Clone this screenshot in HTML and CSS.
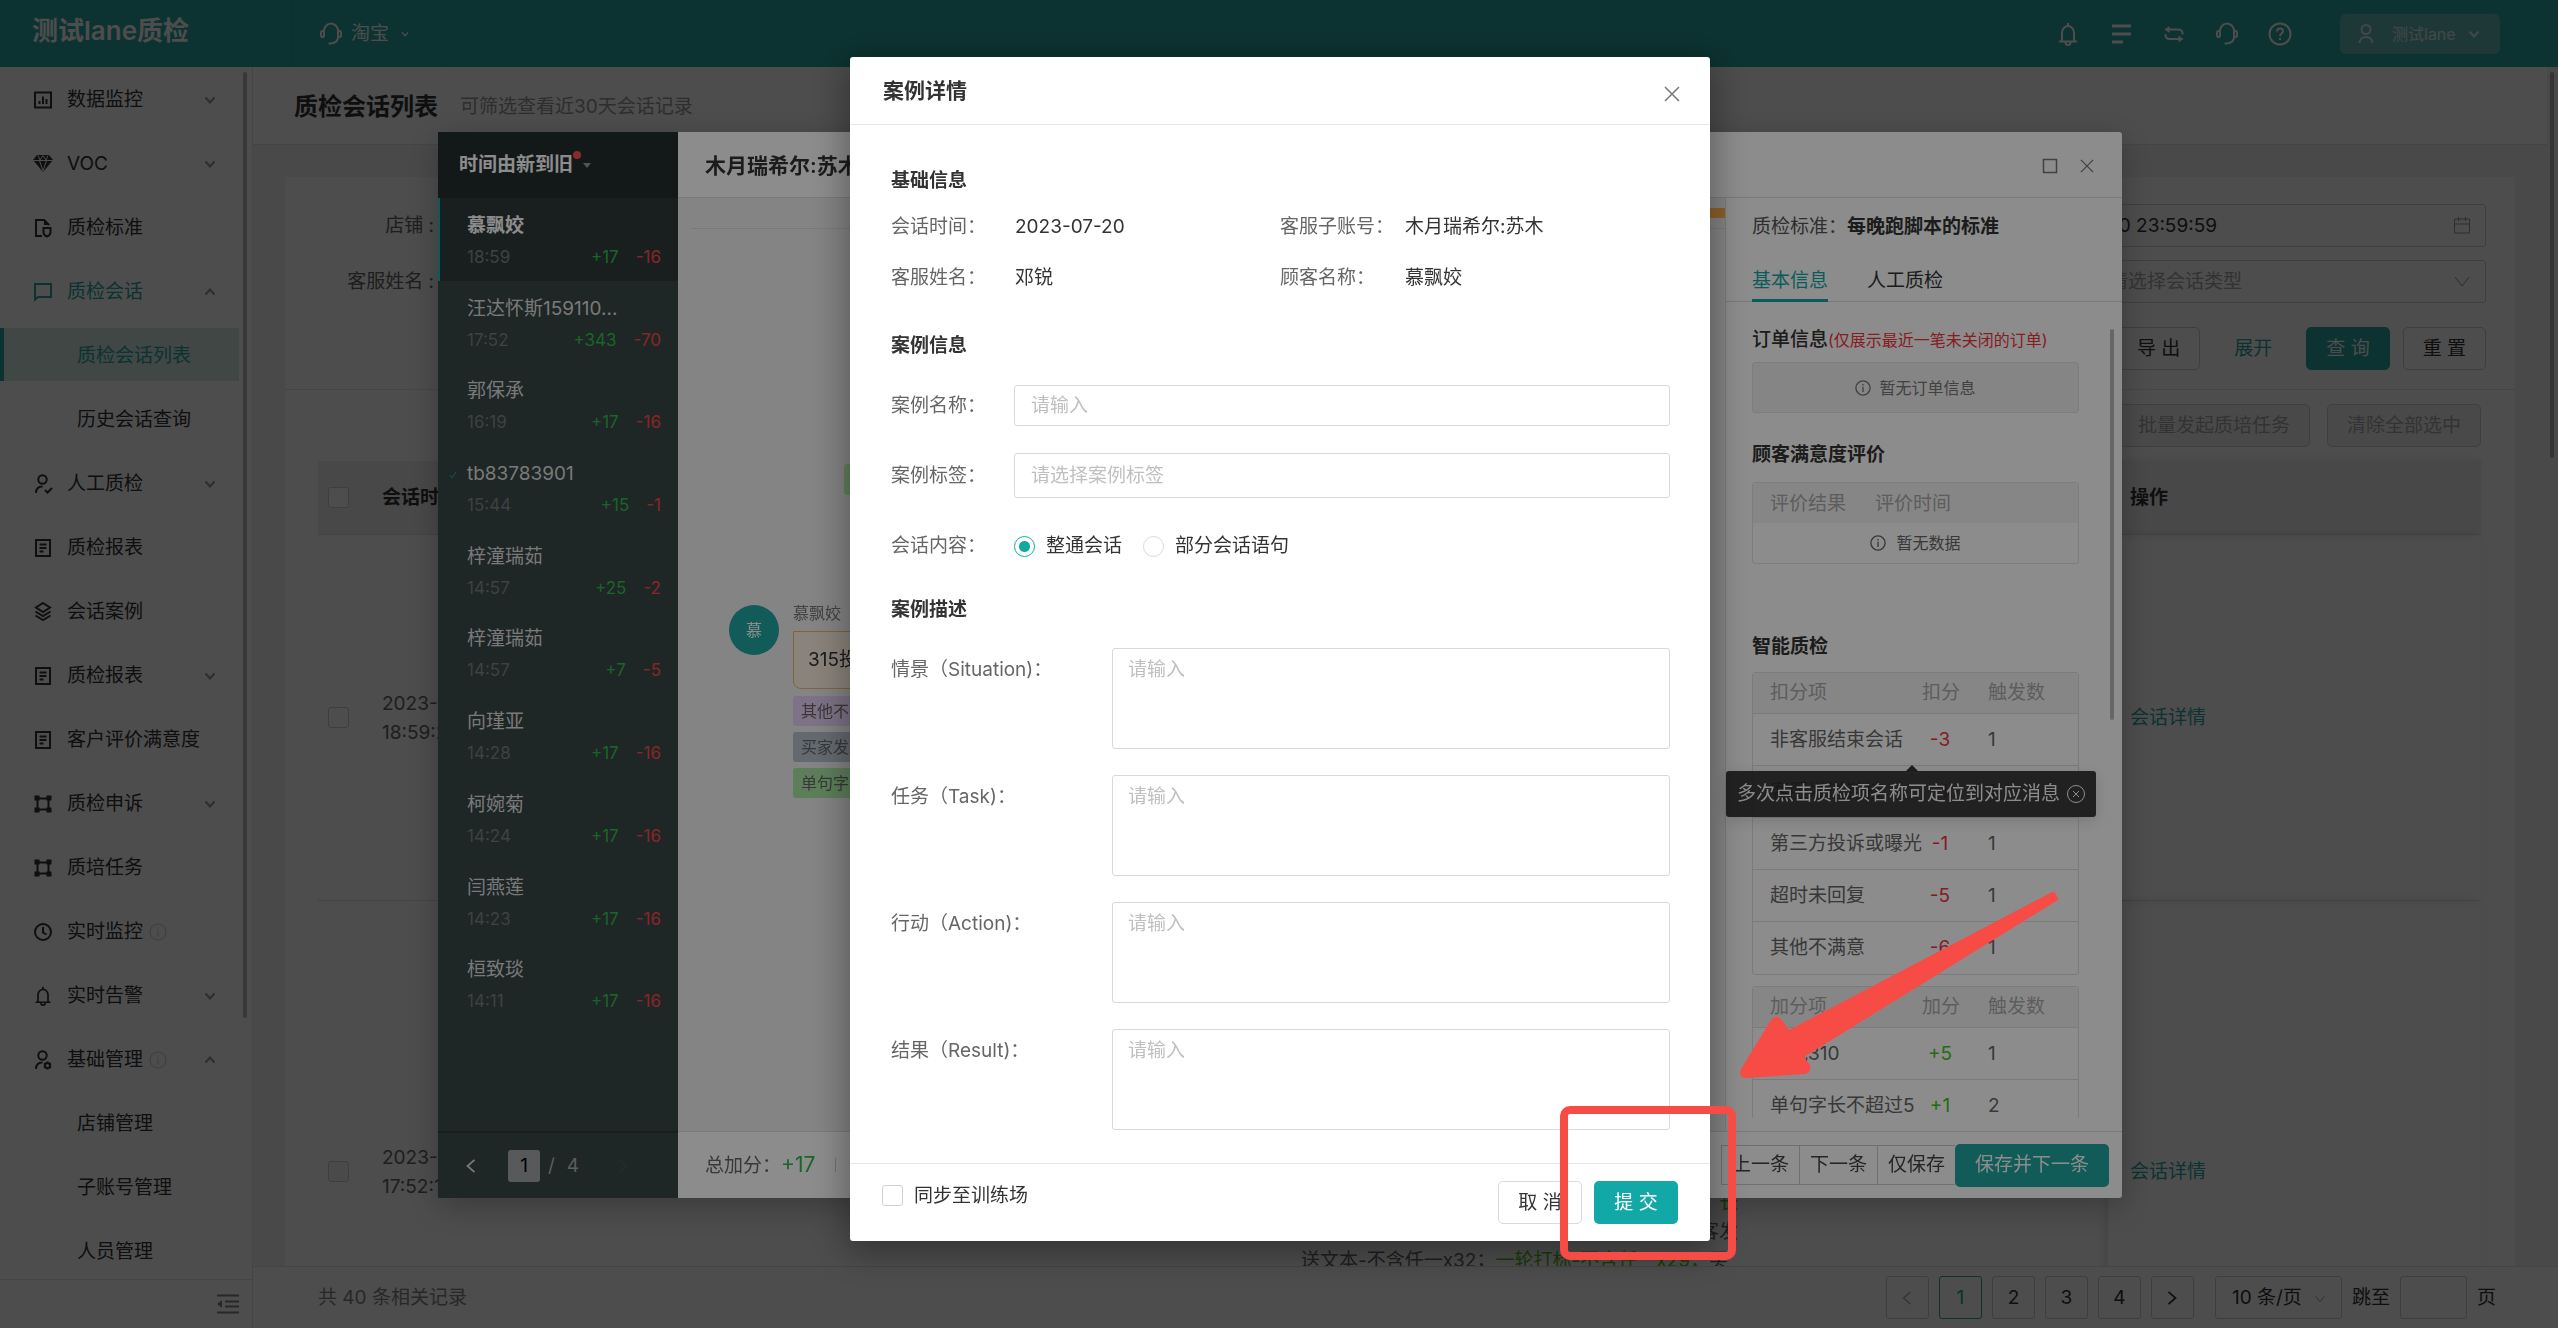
FILE: index.html
```html
<!DOCTYPE html>
<html lang="zh-CN">
<head>
<meta charset="utf-8">
<title>质检会话列表</title>
<link rel="stylesheet" href="styles.css">
</head>
<body>
<svg class="sprite" aria-hidden="true">
  <symbol id="i-down" viewBox="0 0 12 12"><path d="M1.500 3.500 6 8.500l4.500-5" /></symbol>
  <symbol id="i-up" viewBox="0 0 12 12"><path d="M1.500 8.500 6 3.500l4.500 5" /></symbol>
  <symbol id="i-left" viewBox="0 0 12 16"><path d="M10 1 2 8l8 7" /></symbol>
  <symbol id="i-right" viewBox="0 0 12 16"><path d="m2 1 8 7-8 7" /></symbol>
  <symbol id="i-x" viewBox="0 0 16 16"><path d="m1 1 14 14M15 1 1 15" /></symbol>
  <symbol id="i-info" viewBox="0 0 18 18"><circle cx="9" cy="9" r="8" /><path d="M9 7.500v6M9 4.500v1.600" /></symbol>
  <symbol id="i-chart" viewBox="0 0 20 20"><path d="M2 2.500h16v15H2zM6.500 11v3M10 6.500V14M13.500 9v5" /></symbol>
  <symbol id="i-voc" viewBox="0 0 20 20"><path class="solid" d="M4 1h12l4 5-10 12L0 6z" /><path class="cut" d="M0 6.500h20M6.500 6.500 10 17l3.500-10.500M5 1.500l2 4.500 3-4.500 3 4.500 2-4.500" /></symbol>
  <symbol id="i-std" viewBox="0 0 20 20"><path d="M9 18H3V2h8l5 5" /><path class="solid" d="M11 1v6h6z" /><path d="M10.500 10h7v4.500q0 2.500-3.500 4-3.500-1.500-3.500-4z" /></symbol>
  <symbol id="i-chat" viewBox="0 0 20 20"><path d="M2 2h16v13H5l-3 2.500z" /></symbol>
  <symbol id="i-user" viewBox="0 0 20 20"><circle cx="9.500" cy="5.500" r="4.200" /><path d="M3 19c0-4 2.500-6.500 6.500-6.500M12 16l2.500 2.500 4.500-4.500" /></symbol>
  <symbol id="i-userset" viewBox="0 0 20 20"><circle cx="9.500" cy="5.500" r="4.200" /><path d="M3 19c0-4 2.500-6.500 6.500-6.500" /><circle cx="14.500" cy="15.500" r="2.500" /><path d="M14.500 11.500v1.500M14.500 18v1.500M11 13.500l1.500.8M16.500 16.700l1.500.8M18 13.500l-1.500.8M12.500 16.700l-1.500.8" /></symbol>
  <symbol id="i-doc" viewBox="0 0 20 20"><path d="M3 2h14v16H3zM6.500 6.500h7M6.500 10h7M6.500 13.500h4" /></symbol>
  <symbol id="i-layers" viewBox="0 0 20 20"><path d="m10 1 7 4.500-7 4.500-7-4.500zM2.500 9.500 10 14l7.500-4.500M2.500 13.500 10 18l7.500-4.500" /></symbol>
  <symbol id="i-frame" viewBox="0 0 20 20"><path d="M4.500 4.500h11v11h-11z" /><path class="solid" d="M1.500 1.500h5v5h-5zM13.500 1.500h5v5h-5zM1.500 13.500h5v5h-5zM13.500 13.500h5v5h-5z" /></symbol>
  <symbol id="i-clock" viewBox="0 0 20 20"><circle cx="10" cy="10" r="8" /><path d="M10 5v5.500l3.500 2" /></symbol>
  <symbol id="i-bell" viewBox="0 0 20 24"><path d="M4 19v-8a6 7 0 0 1 12 0v8M1 19.500h18M10 1v3M7.500 20.500a2.500 2.500 0 0 0 5 0" /></symbol>
  <symbol id="i-headset" viewBox="0 0 24 24"><path d="M5 15V9a7 7.500 0 0 1 14 0v6c0 4-3 6-7 6.500M5 9H3.500a1.500 1.500 0 0 0-1.500 1.500v3A1.500 1.500 0 0 0 3.500 15H5M19 9h1.500a1.500 1.500 0 0 1 1.500 1.500v3a1.500 1.500 0 0 1-1.500 1.500H19M9.500 21.500H13" /></symbol>
</svg>

<div class="app">
  <header class="topbar">
    <div class="logo">测试lane质检</div>
    <button class="platform" type="button"><svg class="ico24"><use href="#i-headset" /></svg>淘宝<svg class="ico8"><use href="#i-down" /></svg></button>
    <div class="tools">
      <svg class="ico24"><use href="#i-bell" /></svg>
      <svg class="ico24" viewBox="0 0 24 24"><path class="bars" d="M3 4h19M3 12h19M3 20h11" /></svg>
      <svg class="ico24" viewBox="0 0 24 24"><path d="M6 7.500h10q4.500 0 4.500 4v1M18 17H8q-4.500 0-4.500-4v-1" /><path class="solid" d="M7.500 4v7L2.500 7.500zM16.500 13.500v7l5-3.500z" /></svg>
      <svg class="ico24"><use href="#i-headset" /></svg>
      <svg class="ico24" viewBox="0 0 24 24"><circle cx="12" cy="12" r="10.500" /><path d="M9 9.500c0-4 6-4 6-.3 0 2.300-3 2.300-3 5M12 16v2" /></svg>
    </div>
    <button class="account" type="button"><svg class="ico20" viewBox="0 0 20 20"><circle cx="10" cy="5.500" r="4.500" /><path d="M3.500 19c0-8 13-8 13 0" /></svg>测试lane<svg class="ico12"><use href="#i-down" /></svg></button>
  </header>

  <div class="frame">
    <nav class="side">
      <ul class="menu">
        <li><a href="#"><svg class="ico20"><use href="#i-chart" /></svg>数据监控<svg class="arrow"><use href="#i-down" /></svg></a></li>
        <li><a href="#"><svg class="ico20"><use href="#i-voc" /></svg>VOC<svg class="arrow"><use href="#i-down" /></svg></a></li>
        <li><a href="#"><svg class="ico20"><use href="#i-std" /></svg>质检标准</a></li>
        <li><a href="#" class="open"><svg class="ico20"><use href="#i-chat" /></svg>质检会话<svg class="arrow"><use href="#i-up" /></svg></a></li>
        <li><a href="#" class="sub active">质检会话列表</a></li>
        <li><a href="#" class="sub">历史会话查询</a></li>
        <li><a href="#"><svg class="ico20"><use href="#i-user" /></svg>人工质检<svg class="arrow"><use href="#i-down" /></svg></a></li>
        <li><a href="#"><svg class="ico20"><use href="#i-doc" /></svg>质检报表</a></li>
        <li><a href="#"><svg class="ico20"><use href="#i-layers" /></svg>会话案例</a></li>
        <li><a href="#"><svg class="ico20"><use href="#i-doc" /></svg>质检报表<svg class="arrow"><use href="#i-down" /></svg></a></li>
        <li><a href="#"><svg class="ico20"><use href="#i-doc" /></svg>客户评价满意度</a></li>
        <li><a href="#"><svg class="ico20"><use href="#i-frame" /></svg>质检申诉<svg class="arrow"><use href="#i-down" /></svg></a></li>
        <li><a href="#"><svg class="ico20"><use href="#i-frame" /></svg>质培任务</a></li>
        <li><a href="#"><svg class="ico20"><use href="#i-clock" /></svg>实时监控<svg class="tip-ico"><use href="#i-info" /></svg></a></li>
        <li><a href="#"><svg class="ico20"><use href="#i-bell" /></svg>实时告警<svg class="arrow"><use href="#i-down" /></svg></a></li>
        <li><a href="#"><svg class="ico20"><use href="#i-userset" /></svg>基础管理<svg class="tip-ico"><use href="#i-info" /></svg><svg class="arrow"><use href="#i-up" /></svg></a></li>
        <li><a href="#" class="sub">店铺管理</a></li>
        <li><a href="#" class="sub">子账号管理</a></li>
        <li><a href="#" class="sub">人员管理</a></li>
      </ul>
      <div class="side-foot"><svg class="fold" viewBox="0 0 22 20"><path d="M0 1.500h22M8 7.500h14M8 12.500h14M0 18.500h22" /><path class="solid" d="M0 10l5-4v8z" /></svg></div>
      <span class="thumb side-thumb"></span>
    </nav>

    <main class="main">
      <div class="page-head"><h1>质检会话列表</h1><span>可筛选查看近30天会话记录</span></div>
      <div class="content">
        <section class="card">
          <form class="filters">
            <div class="filter-row">
              <label for="shop">店铺 :</label><input id="shop" class="grow" type="text">
              <span class="field"><input class="date" type="text" value="2023-07-20 23:59:59" aria-label="会话日期"><svg class="cal" viewBox="0 0 18 18"><path d="M1.500 3h15v14h-15zM1.500 8h15M5.500 1v4M12.500 1v4" /></svg></span>
            </div>
            <div class="filter-row">
              <label for="agent">客服姓名 :</label><input id="agent" class="grow" type="text">
              <span class="field"><select class="ctype" aria-label="会话类型"><option>请选择会话类型</option></select><svg class="cal" viewBox="0 0 18 18"><path d="m2 5 7 9 7-9" /></svg></span>
            </div>
            <div class="filter-actions">
              <button type="button">导 出</button><a href="#">展开</a><button class="primary" type="button">查 询</button><button type="button">重 置</button>
            </div>
          </form>
          <div class="batch"><button type="button" disabled>批量发起质培任务</button><button type="button" disabled>清除全部选中</button></div>
          <table class="list">
            <colgroup><col class="c-check"><col class="c-time"><col class="c-fill"><col class="c-text"><col class="c-fill2"><col class="c-op"></colgroup>
            <thead><tr><th><input type="checkbox" aria-label="全选"></th><th>会话时间</th><th></th><th></th><th></th><th class="op">操作</th></tr></thead>
            <tbody>
              <tr class="r1"><td><input type="checkbox" aria-label="选择会话"></td><td>2023-07-20<br>18:59:22</td><td></td><td></td><td></td><td class="op"><a href="#">会话详情</a></td></tr>
              <tr class="r2"><td><input type="checkbox" aria-label="选择会话" disabled></td><td>2023-07-20<br>17:52:16</td><td></td>
                <td class="marks"><div class="end good">长</div><div class="end">客发</div><div>送文本-不含任一x32；<span class="good">一轮打标-不含任一x29；</span>买</div></td><td></td><td class="op"><a href="#">会话详情</a></td></tr>
            </tbody>
          </table>
        </section>
      </div>
      <span class="thumb main-thumb"></span>
      <footer class="pager">
        <span class="total">共 40 条相关记录</span>
        <button type="button" class="dim" aria-label="上一页"><svg class="ico14"><use href="#i-left" /></svg></button>
        <button type="button" class="on">1</button><button type="button">2</button><button type="button">3</button><button type="button">4</button>
        <button type="button" aria-label="下一页"><svg class="ico14"><use href="#i-right" /></svg></button>
        <span class="size"><select aria-label="每页条数"><option>10 条/页</option></select><svg class="ico12"><use href="#i-down" /></svg></span>
        <label for="jump">跳至</label><input id="jump" type="text"><span>页</span>
      </footer>
    </main>
  </div>
</div>

<div class="mask session-mask">
  <section class="session" role="dialog" aria-label="会话详情">
    <aside class="queue">
      <div class="queue-head">时间由新到旧<i class="dot"></i><i class="caret"></i></div>
      <ul>
        <li class="cur"><b>慕飘姣</b><p><time>18:59</time><em>+17</em><i>-16</i></p></li>
        <li><b>汪达怀斯159110...</b><p><time>17:52</time><em>+343</em><i>-70</i></p></li>
        <li><b>郭保承</b><p><time>16:19</time><em>+17</em><i>-16</i></p></li>
        <li class="done"><svg class="ico8" viewBox="0 0 8 8"><path d="m1 4 2 3 4-6" /></svg><b>tb83783901</b><p><time>15:44</time><em>+15</em><i>-1</i></p></li>
        <li><b>梓潼瑞茹</b><p><time>14:57</time><em>+25</em><i>-2</i></p></li>
        <li><b>梓潼瑞茹</b><p><time>14:57</time><em>+7</em><i>-5</i></p></li>
        <li><b>向瑾亚</b><p><time>14:28</time><em>+17</em><i>-16</i></p></li>
        <li><b>柯婉菊</b><p><time>14:24</time><em>+17</em><i>-16</i></p></li>
        <li><b>闫燕莲</b><p><time>14:23</time><em>+17</em><i>-16</i></p></li>
        <li><b>桓致琰</b><p><time>14:11</time><em>+17</em><i>-16</i></p></li>
      </ul>
      <div class="queue-foot"><button type="button" aria-label="上一页"><svg class="ico14"><use href="#i-left" /></svg></button><input type="text" value="1" aria-label="页码"><span>/</span><span>4</span><button type="button" class="off" aria-label="下一页"><svg class="ico14"><use href="#i-right" /></svg></button></div>
    </aside>
    <div class="work">
      <header class="work-head"><h2>木月瑞希尔:苏木</h2><button type="button" aria-label="最大化"><svg class="ico16" viewBox="0 0 16 16"><path d="M1.500 1.500h13v13h-13z" /></svg></button><button type="button" aria-label="关闭"><svg class="ico14"><use href="#i-x" /></svg></button></header>
      <div class="work-body">
        <div class="chat">
          <div class="chat-bar"><i></i></div>
          <div class="chat-note"><span>开场白</span></div>
          <div class="msg">
            <span class="avatar">慕</span>
            <div><p class="who">慕飘姣</p><p class="bubble">315投诉你们</p><p class="tag violet">其他不满意</p><p class="tag slate">买家发送</p><p class="tag green">单句字长</p></div>
          </div>
        </div>
        <div class="panel">
          <p class="std">质检标准：<b>每晚跑脚本的标准</b></p>
          <div class="tabs"><a href="#" class="on">基本信息</a><a href="#">人工质检</a></div>
          <div class="scroll">
            <h3>订单信息<small>(仅展示最近一笔未关闭的订单)</small></h3>
            <div class="none"><svg class="ico16"><use href="#i-info" /></svg>暂无订单信息</div>
            <h3 class="rate-title">顾客满意度评价</h3>
            <div class="rate"><div class="rate-head"><span>评价结果</span><span>评价时间</span></div><div class="rate-none"><svg class="ico16"><use href="#i-info" /></svg>暂无数据</div></div>
            <h3 class="ai-title">智能质检</h3>
            <table class="score">
              <thead><tr><th>扣分项</th><th class="pt">扣分</th><th class="ct">触发数</th></tr></thead>
              <tbody>
                <tr><td>非客服结束会话</td><td class="pt bad">-3</td><td class="ct">1</td></tr>
                <tr><td>客服发送链接</td><td class="pt bad">-1</td><td class="ct">1</td></tr>
                <tr><td>第三方投诉或曝光</td><td class="pt bad">-1</td><td class="ct">1</td></tr>
                <tr><td>超时未回复</td><td class="pt bad">-5</td><td class="ct">1</td></tr>
                <tr><td>其他不满意</td><td class="pt bad">-6</td><td class="ct">1</td></tr>
              </tbody>
            </table>
            <table class="score">
              <thead><tr><th>加分项</th><th class="pt">加分</th><th class="ct">触发数</th></tr></thead>
              <tbody>
                <tr><td>测试310</td><td class="pt good">+5</td><td class="ct">1</td></tr>
                <tr><td>单句字长不超过5</td><td class="pt good">+1</td><td class="ct">2</td></tr>
              </tbody>
            </table>
          </div>
          <span class="thumb panel-thumb"></span>
          <div class="bubble-tip">多次点击质检项名称可定位到对应消息<svg class="ico20" viewBox="0 0 20 20"><circle cx="10" cy="10" r="8.500" /><path d="m7 7 6 6M13 7l-6 6" /></svg></div>
        </div>
      </div>
      <footer class="work-foot"><span class="sum">总加分：<b>+17</b></span><i class="bar"></i>
        <div class="group"><button type="button">上一条</button><button type="button">下一条</button><button type="button">仅保存</button><button type="button" class="save">保存并下一条</button></div>
      </footer>
    </div>
  </section>
</div>

<div class="mask case-mask">
  <form class="case" role="dialog" aria-label="案例详情">
    <header class="case-head"><h2>案例详情</h2><button type="button" aria-label="关闭"><svg class="ico16"><use href="#i-x" /></svg></button></header>
    <div class="case-body">
      <h3>基础信息</h3>
      <dl class="facts">
        <dt>会话时间：</dt><dd>2023-07-20</dd><dt>客服子账号：</dt><dd>木月瑞希尔:苏木</dd>
        <dt>客服姓名：</dt><dd>邓锐</dd><dt>顾客名称：</dt><dd>慕飘姣</dd>
      </dl>
      <h3 class="info-title">案例信息</h3>
      <div class="fields">
        <label for="case-name">案例名称：</label><input id="case-name" type="text" placeholder="请输入">
        <label for="case-tag">案例标签：</label><input id="case-tag" class="tall" type="text" placeholder="请选择案例标签">
      </div>
      <div class="choice"><span>会话内容：</span><label><input type="radio" name="scope" checked>整通会话</label><label><input type="radio" name="scope">部分会话语句</label></div>
      <h3 class="desc-title">案例描述</h3>
      <div class="areas">
        <label for="s">情景（Situation)：</label><textarea id="s" placeholder="请输入"></textarea>
        <label for="t">任务（Task)：</label><textarea id="t" placeholder="请输入"></textarea>
        <label for="a">行动（Action)：</label><textarea id="a" placeholder="请输入"></textarea>
        <label for="r">结果（Result)：</label><textarea id="r" placeholder="请输入"></textarea>
      </div>
    </div>
    <footer class="case-foot"><label><input type="checkbox">同步至训练场</label><button type="button">取 消</button><button type="submit" class="primary">提 交</button></footer>
    <span class="frame-mark"></span>
    <svg class="arrow-mark" viewBox="0 0 330 200"><path d="M320 8 57 146 49 135Q44 130 39 136L9 185Q6 194 14 194L73 190Q80 188 78 181L72 173 326 16Q326 12 322 8z" /></svg>
  </form>
</div>
</body>
</html>
```
FILE: styles.css
```css
* { box-sizing: border-box; }
body { margin: 0; font: 19px/28px Inter, "Noto Sans CJK SC", sans-serif; color: #333; background: #f5f5f5; }
h1, h2, h3, p, ul, dl, dd { margin: 0; padding: 0; }
ul { list-style: none; }
i, em { font-style: normal; }
a { color: #28aaa4; text-decoration: none; }
button, input, select, textarea { font: inherit; color: inherit; margin: 0; }
button { cursor: pointer; white-space: nowrap; }
svg { flex: none; fill: none; stroke: currentColor; stroke-width: 2; }
.solid { fill: currentColor; stroke: none; }
.cut { stroke: #fff; stroke-width: 1; }
.sprite { position: absolute; width: 0; height: 0; }
.ico24 { width: 24px; height: 24px; }
.ico20 { width: 20px; height: 20px; }
.ico16 { width: 16px; height: 16px; }
.ico14 { width: 14px; height: 14px; }
.ico12 { width: 12px; height: 12px; }
.ico8 { width: 8px; height: 8px; }
.good { color: #52c41a; }
.bad { color: #f5222d; }
.thumb { position: absolute; width: 4px; border-radius: 2px; }

.app { display: flex; flex-direction: column; height: 100vh; overflow: hidden; }
.topbar { display: flex; align-items: center; flex: none; height: 67px; padding: 0 58px 0 0; background: #28aaa4; color: #fff; }
.logo { width: 292px; padding: 0 0 6px 32px; font-size: 26px; font-weight: 600; }
.platform { display: flex; align-items: center; gap: 8px; height: 67px; width: 151px; padding: 0 0 0 26px; border: solid rgba(0, 0, 0, .06); border-width: 0 1px; background: none; }
.platform .ico8 { margin-left: 4px; }
.tools { display: flex; gap: 29px; margin-left: auto; }
.tools .bars { stroke-width: 3; }
.account { display: flex; align-items: center; gap: 16px; height: 40px; width: 160px; margin-left: 48px; padding: 0 18px 0 16px; border: 0; border-radius: 6px; background: #66bcb7; color: #dcefed; font-size: 16px; }
.account .ico12 { margin-left: -4px; }

.frame { display: flex; flex: 1; min-height: 0; }
.side { position: relative; display: flex; flex-direction: column; flex: none; width: 253px; background: #fff; border-right: 1px solid #e8e8e8; }
.menu { display: flex; flex-direction: column; gap: 11px; flex: 1; min-height: 0; padding-top: 5px; overflow: hidden; }
.menu a { display: flex; align-items: center; height: 53px; width: 239px; padding: 2px 23px 0 33px; color: #333; white-space: nowrap; }
.menu .ico20 { margin-right: 14px; }
.menu .arrow { width: 12px; height: 12px; margin-left: auto; color: #999; }
.menu .tip-ico { width: 18px; height: 18px; margin-left: 6px; color: #ccc; stroke-width: 1; }
.menu .open { color: #28aaa4; }
.menu .sub { padding-left: 77px; }
.menu .active { padding-left: 73px; border-left: 4px solid #28aaa4; background: #d7ebe8; color: #28aaa4; }
.side-foot { display: flex; align-items: center; justify-content: flex-end; flex: none; height: 49px; padding-right: 13px; border-top: 1px solid #e8e8e8; color: #888; }
.fold { width: 22px; height: 20px; }
.side-thumb { right: 5px; top: 5px; height: 75%; background: #bbb; }

.main { position: relative; display: flex; flex-direction: column; flex: 1; min-width: 0; background: #f3f3f3; }
.page-head { display: flex; align-items: center; gap: 22px; flex: none; height: 78px; margin-right: 11px; padding: 2px 0 0 41px; background: #fff; border-bottom: 1px solid #e4e4e4; color: #999; }
h1 { font-size: 24px; font-weight: 600; color: #333; }
.content { flex: 1; min-height: 0; padding: 32px 43px 0 32px; overflow: hidden; }
.card { background: #fff; }
.filters { padding: 27px 29px 19px 0; border-bottom: 1px solid #e8e8e8; }
.filter-row { display: flex; align-items: center; height: 43px; margin-bottom: 13px; color: #666; }
.filter-row label { width: 157px; padding-right: 8px; text-align: right; }
.filter-row input, .filter-row select { height: 43px; border: 1px solid #d0d0d0; border-radius: 3px; background: #fff; }
.grow { flex: 1; margin-right: 400px; }
.field { position: relative; display: flex; width: 500px; }
.field input, .field select { width: 100%; appearance: none; }
.filter-row .date { padding-right: 268px; text-align: right; color: #333; }
.filter-row .ctype { padding-left: 122px; color: #aaa; }
.cal { position: absolute; right: 15px; top: 12px; width: 18px; height: 18px; color: #999; stroke-width: 1; }
.filter-actions { display: flex; align-items: center; justify-content: flex-end; gap: 13px; padding-top: 11px; }
.filter-actions a { padding: 0 21px; }
.filter-actions button, .batch button { height: 43px; padding: 0 19px; border: 1px solid #d0d0d0; border-radius: 5px; background: #fff; }
.filter-actions .primary { border-color: #28aaa4; background: #28aaa4; color: #fff; }
.batch { display: flex; justify-content: flex-end; gap: 17px; padding: 14px 34px 14px 0; }
.batch button { background: #f5f5f5; color: #aaa; }
.list { width: calc(100% - 67px); margin-left: 33px; table-layout: fixed; border-spacing: 0; }
.c-check { width: 42px; } .c-time { width: 213px; } .c-fill { width: 728px; } .c-text { width: 437px; } .c-op { width: 373px; }
.list th { height: 74px; padding: 0 0 0 22px; text-align: left; font-weight: 600; background: #f1f1f1; border-bottom: 1px solid #e4e4e4; }
.list td { padding: 0 0 0 22px; color: #666; line-height: 29px; border-bottom: 1px solid #e4e4e4; }
.list tr > :first-child { padding-left: 10px; }
.list .marks { padding: 0; vertical-align: bottom; white-space: nowrap; }
.list .end { text-align: right; }
.list .op { box-shadow: -4px 0 8px rgba(0, 0, 0, .1); }
.r1 td { height: 366px; }
.r2 td { height: 542px; }
.r2 .marks { padding-bottom: 167px; }
input[type=checkbox] { appearance: none; display: block; width: 21px; height: 21px; border: 1px solid #d0d0d0; border-radius: 3px; background: #fff; }
input[type=checkbox]:disabled { background: #f7f7f7; }
.main-thumb { right: 4px; top: 5px; height: 386px; background: #aaadb0; }
.pager { display: flex; align-items: center; gap: 10px; flex: none; height: 62px; padding-right: 62px; border-top: 1px solid #e4e4e4; background: #fff; }
.total { flex: 1; padding-left: 65px; color: #888; }
.pager button { display: grid; place-items: center; width: 43px; height: 43px; padding: 0; border: 1px solid #d0d0d0; border-radius: 3px; background: #fff; }
.pager .on { border-color: #28aaa4; color: #28aaa4; }
.pager .dim { color: #bbb; }
.size { position: relative; margin-left: 11px; }
.size select { width: 127px; height: 43px; padding-left: 16px; appearance: none; border: 1px solid #d0d0d0; border-radius: 3px; background: #fff; }
.size svg { position: absolute; right: 16px; top: 17px; stroke-width: 1; color: #999; }
.pager input { width: 67px; height: 43px; border: 1px solid #d0d0d0; border-radius: 3px; }

.mask { position: fixed; inset: 0; background: rgba(0, 0, 0, .45); }
.session-mask { padding: 132px 436px 0 438px; }
.session { display: flex; background: #fff; border-radius: 3px; box-shadow: 0 8px 32px rgba(0, 0, 0, .25); }
.queue { display: flex; flex-direction: column; flex: none; width: 240px; background: #384545; color: #eee; }
.queue-head { display: flex; align-items: center; height: 66px; padding-left: 21px; background: #242d2f; font-weight: 600; color: #fff; white-space: nowrap; }
.dot { width: 8px; height: 8px; margin: -20px 0 0 0; border-radius: 50%; background: #ff4d4f; }
.caret { margin-left: 2px; border: 4px solid transparent; border-top: 5px solid #999; border-bottom: 0; }
.queue ul { display: grid; grid-template-rows: repeat(10, 1fr); height: 827px; margin-bottom: 106px; }
.queue li { position: relative; padding: 14px 17px 0 29px; }
.queue b { font-weight: 400; color: #ddd; }
.queue .cur { background: #2f3a3a; border-left: 2px solid #13a8a8; padding-left: 27px; }
.queue .cur b { font-weight: 600; color: #fff; }
.queue p { display: flex; gap: 17px; padding-top: 3px; font-size: 17px; color: #707878; }
.queue time { flex: 1; }
.queue em { color: #2eb84c; }
.queue p i { color: #f5454a; }
.done svg { position: absolute; left: 11px; top: 25px; color: #13a8a8; stroke-width: 1; }
.queue-foot { display: flex; align-items: center; height: 67px; padding-left: 26px; border-top: 2px solid #2c3636; }
.queue-foot button { display: grid; padding: 0; border: 0; background: none; color: #ddd; }
.queue-foot button.off { margin-left: auto; margin-right: 48px; color: #444f4f; }
.queue-foot input { width: 32px; height: 32px; margin: 0 8px 0 30px; padding: 0; border: 0; border-radius: 3px; background: #a0a3a6; color: #000; text-align: center; }
.queue-foot span { margin-right: 12px; color: #aaa; }

.work { display: flex; flex-direction: column; flex: 1; min-width: 0; }
.work-head { display: flex; align-items: center; gap: 22px; height: 66px; padding: 2px 28px 0 27px; border-bottom: 1px solid #ddd; }
h2 { flex: 1; font-size: 21px; font-weight: 600; }
.work-head button, .case-head button { display: grid; padding: 0; border: 0; background: none; color: #777; }
.work-head svg, .case-head svg { stroke-width: 1.500; }
.work-body { display: flex; flex: none; height: 933px; }
.chat { flex: 1; background: #f0f0f0; }
.chat-bar { display: flex; justify-content: flex-end; align-items: center; height: 31px; margin-left: 13px; border-bottom: 1px solid #ddd; }
.chat-bar i { width: 40px; height: 10px; background: #ffb04d; }
.chat-note { padding: 235px 0 0 166px; }
.chat-note span { display: inline-block; height: 31px; padding: 0 8px; border-radius: 3px; background: #b0eca8; font-size: 16px; }
.msg { display: flex; gap: 14px; padding: 104px 0 0 51px; }
.msg > div { display: grid; justify-items: start; }
.avatar { display: grid; place-items: center; width: 50px; height: 50px; margin-top: 6px; border-radius: 50%; background: #1fa6a0; color: #fff; font-size: 16px; }
.who { font-size: 16px; color: #777; margin-bottom: 4px; }
.bubble { padding: 14px; margin-bottom: 1px; border: 1px solid #f0b468; border-radius: 0 0 8px 8px; background: #fbefe0; }
.tag { height: 30px; margin-top: 6px; padding: 1px 8px; border-radius: 3px; font-size: 16px; color: #666; }
.violet { background: #e3d0f4; }
.slate { background: #b6c0cc; }
.green { background: #a8e8a2; }

.panel { position: relative; display: flex; flex-direction: column; width: 397px; padding: 15px 0 13px; border-left: 1px solid #ddd; background: #fff; }
.std { padding-left: 26px; color: #555; }
.std b { font-weight: 600; color: #333; }
.tabs { display: flex; gap: 39px; padding: 26px 0 0 26px; border-bottom: 1px solid #ddd; }
.tabs a { padding-bottom: 4px; margin-bottom: -1px; border-bottom: 3px solid transparent; color: #333; }
.tabs .on { border-color: #13a8a8; color: #13a8a8; }
.scroll { flex: 1; min-height: 0; padding: 24px 43px 0 26px; overflow: hidden; }
h3 { font-size: 19px; font-weight: 600; line-height: 28px; }
h3 small { font-size: 16px; font-weight: 400; color: #f5343c; }
.scroll > h3:first-child { font-weight: 500; }
.none { display: flex; align-items: center; justify-content: center; gap: 8px; height: 51px; margin-top: 8px; border: 1px solid #e4e4e4; border-radius: 3px; background: #f3f3f3; color: #777; font-size: 16px; }
.none svg, .rate-none svg { stroke-width: 1.500; }
.rate-title { margin: 28px 0 13px; }
.rate { border: 1px solid #e4e4e4; border-radius: 3px; }
.rate-head { display: flex; gap: 29px; height: 40px; padding: 7px 17px; background: #f5f5f5; color: #aaa; }
.rate-none { display: flex; align-items: center; justify-content: center; gap: 10px; height: 40px; font-size: 16px; color: #666; }
.ai-title { margin: 69px 0 11px; }
.score { width: 100%; margin-bottom: 11px; table-layout: fixed; border: 1px solid #e0e0e0; border-radius: 3px; border-spacing: 0; white-space: nowrap; }
.score th, .score td { height: 52px; padding: 0 0 0 17px; text-align: left; color: #666; border-bottom: 1px solid #e0e0e0; }
.score th { height: 41px; background: #f5f5f5; color: #aaa; font-weight: 400; }
.score th:first-child { width: 169px; }
.score tr:last-child td { border-bottom: 0; }
.score .pt { width: 36px; padding: 0; text-align: center; }
.score .ct { padding-left: 30px; }
.score .bad { color: #f5343c; }
.score .good { color: #45c41a; }
.panel-thumb { right: 8px; top: 131px; height: 391px; background: #bbb; }
.bubble-tip { position: absolute; left: 0; top: 573px; display: flex; align-items: center; justify-content: space-between; width: 370px; height: 46px; padding: 0 10px 0 11px; border-radius: 3px; background: rgba(40, 40, 40, .9); color: #fff; white-space: nowrap; box-shadow: 0 4px 16px rgba(0, 0, 0, .15); }
.bubble-tip::before { content: ""; position: absolute; left: 180px; top: -6px; border: 6px solid transparent; border-top: 0; border-bottom-color: #333; }
.bubble-tip svg { stroke-width: 1; }
.work-foot { display: flex; align-items: center; height: 67px; padding: 0 13px 0 27px; border-top: 1px solid #ddd; color: #666; }
.sum b { font-size: 21px; font-weight: 400; color: #2eb84c; }
.bar { width: 1px; height: 14px; margin-left: 20px; background: #ccc; }
.group { display: flex; align-items: center; margin-left: auto; }
.group button { width: 78px; height: 40px; padding: 0; border: 1px solid #ccc; border-right: 0; background: #fff; color: #444; }
.group .save { width: 154px; height: 43px; border: 0; border-radius: 5px; background: #1fa6a0; color: #fff; }

.case-mask { padding: 57px 0 0 2px; }
.case { position: relative; width: 860px; margin: 0 auto; background: #fff; border-radius: 3px; box-shadow: 0 8px 36px 4px rgba(0, 0, 0, .35); }
.case-head { display: flex; align-items: center; height: 68px; padding: 6px 30px 6px 33px; border-bottom: 1px solid #e8e8e8; }
.case-head button { padding-top: 6px; }
.case-body { padding: 42px 40px 33px 41px; }
.facts { display: grid; grid-template-columns: 124px 265px 125px 1fr; row-gap: 23px; padding-top: 18px; }
dt, .case-body label, .choice span { color: #666; white-space: nowrap; }
.info-title { margin: 40px 0 25px; }
.fields { display: grid; grid-template-columns: 123px 1fr; row-gap: 27px; align-items: center; }
.fields input, textarea { width: 100%; height: 41px; padding: 0 16px; border: 1px solid #d9d9d9; border-radius: 3px; background: #fff; outline: 0; }
.fields .tall { height: 45px; }
::placeholder { color: #bfbfbf; opacity: 1; }
.choice { display: flex; align-items: center; gap: 21px; margin-top: 34px; }
.choice span { width: 102px; }
.case-body .choice label { display: flex; align-items: center; gap: 11px; color: #333; }
input[type=radio] { appearance: none; width: 21px; height: 21px; border: 1px solid #d9d9d9; border-radius: 50%; }
input[type=radio]:checked { border-color: #13a8a8; background: radial-gradient(circle, #13a8a8 5px, transparent 6px); }
.desc-title { margin: 36px 0 24px; }
.areas { display: grid; grid-template-columns: 221px 1fr; row-gap: 26px; }
.areas label { padding-top: 8px; }
textarea { display: block; height: 101px; padding: 7px 15px; resize: none; }
.case-foot { display: flex; align-items: center; gap: 12px; height: 78px; padding: 0 32px; border-top: 1px solid #e8e8e8; }
.case-foot label { display: flex; align-items: center; gap: 11px; flex: 1; padding-bottom: 14px; }
.case-foot button { width: 84px; height: 43px; padding: 0; border: 1px solid #d9d9d9; border-radius: 5px; background: #fff; }
.case-foot .primary { border: 0; background: #13a8a8; color: #fff; }
.frame-mark { position: absolute; right: -26px; bottom: -19px; width: 176px; height: 154px; border: 8px solid #f74b46; border-radius: 10px; }
.arrow-mark { position: absolute; left: 882px; top: 827px; width: 330px; height: 200px; }
.arrow-mark path { fill: #f74b46; stroke: none; }
```
